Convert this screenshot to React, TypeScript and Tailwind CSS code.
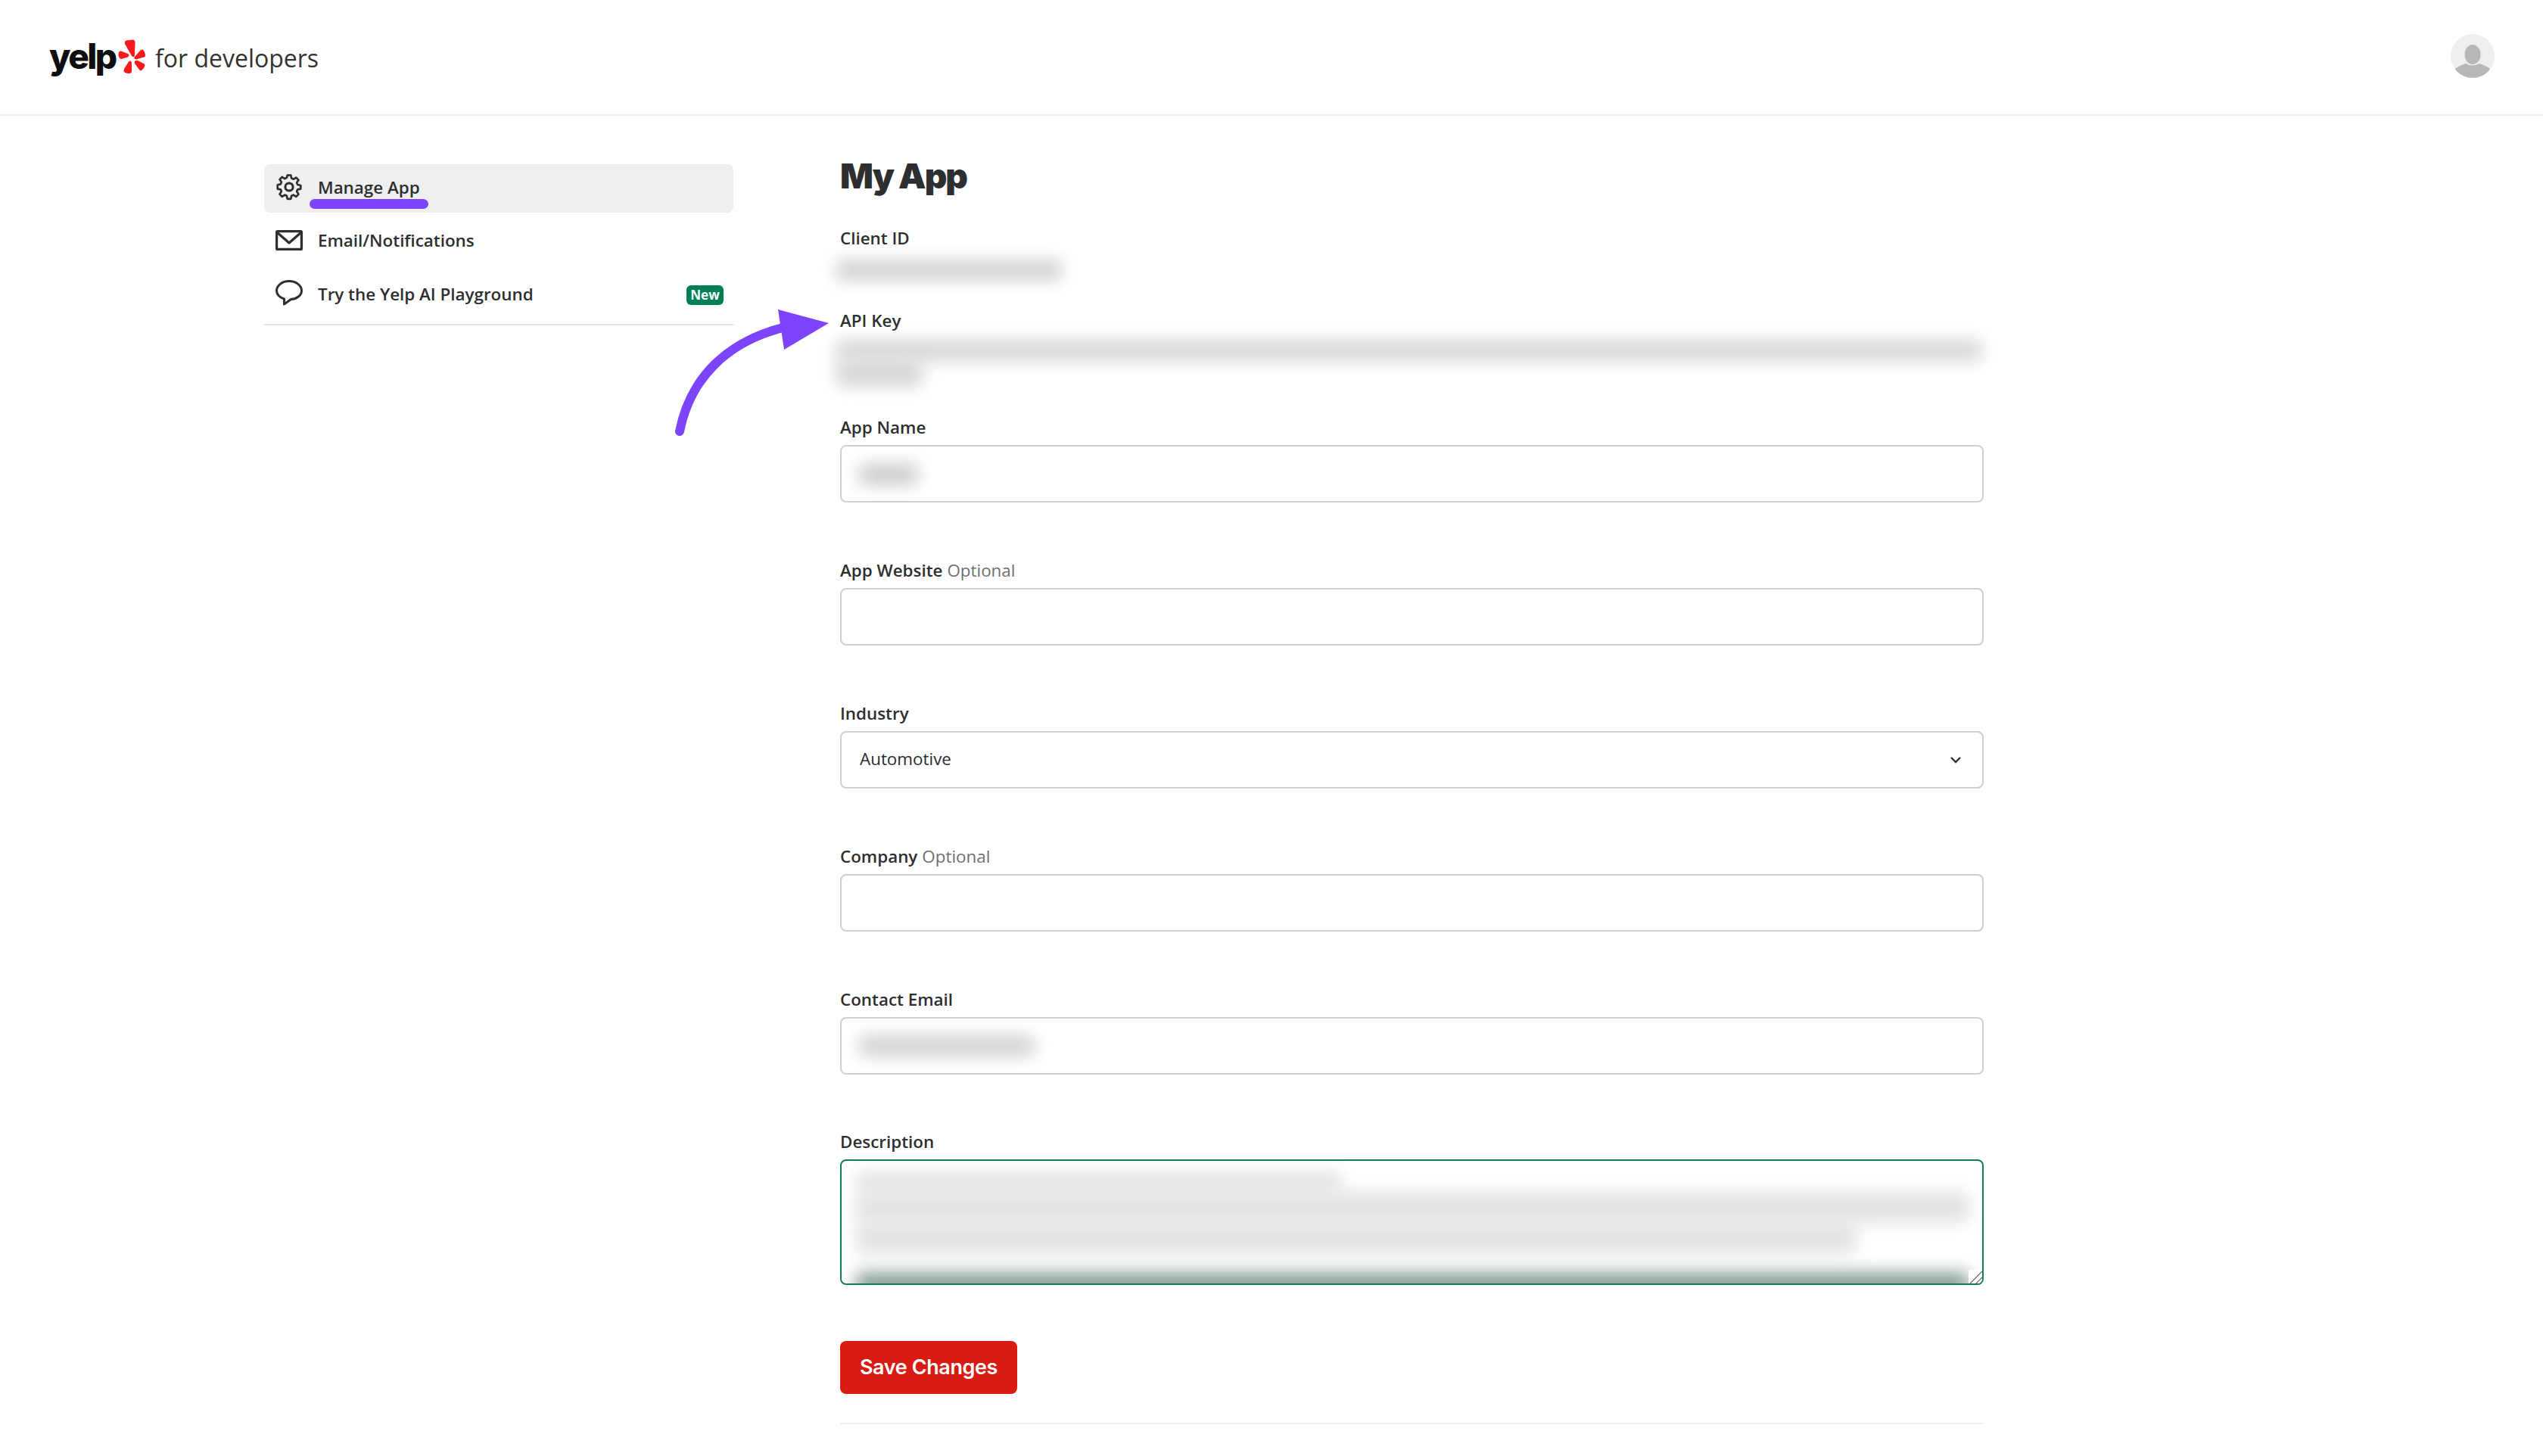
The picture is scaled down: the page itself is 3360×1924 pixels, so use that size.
const openSans = "font-['Open_Sans',sans-serif]";

// stands in for the redacted values, colour comes in through className
const Blur = ({ className }: { className: string }) => <div className={`blur-[11px] ${className}`} />;

const YelpBurst = () => (
  <svg width="36" height="46" viewBox="0 0 36 46" fill="#f8191c">
    <path d="M11 1.5 L19 0.5 Q22.5 0.5 22.5 4 L22 21 Q21.5 25 18 22 L9 6 Q8 3 11 1.5 Z" />
    <path d="M1 23 Q0 21 1 17 Q1.5 15 4 15.5 L13 19 Q16 21 13 23.5 L4 26 Q2 26 1 23 Z" />
    <path d="M8 43 Q7 42 8 39 L14 29.5 Q17 27 18 31 L18 42 Q18 45 15 45 Q10 45 8 43 Z" />
    <path d="M22 29 Q24 27 26 28 L34 32 Q36 33 35 36 Q33 40 31 41 Q29 42 28 40 L22 32 Q21 30 22 29 Z" />
    <path d="M22 23 L30 14 Q32 13 33 14 Q36 17 36 21 Q36 23 34 23.5 L24 26.5 Q20 26 22 23 Z" />
  </svg>
);

const Avatar = () => (
  <svg width="58" height="58" viewBox="0 0 58 58">
    <defs>
      <clipPath id="avatar-clip">
        <circle cx="29" cy="29" r="29" />
      </clipPath>
    </defs>
    <circle cx="29" cy="29" r="29" fill="#efeff0" />
    <g clipPath="url(#avatar-clip)" fill="#b7b7ba">
      <ellipse cx="29" cy="27" rx="10.5" ry="13" />
      <path d="M5 47 Q10 42 20 39 Q29 44 38 39 Q48 42 53 47 L53 60 L5 60 Z" />
    </g>
  </svg>
);

const GearIcon = () => (
  <svg width="36" height="36" viewBox="0 0 24 24" fill="none" stroke="#2d2e2f" strokeWidth="2" strokeLinejoin="round" className="shrink-0 mt-[-1px]">
    <path d="M10.3 1.5h3.4l.6 3 2 .9 2.6-1.6 2.3 2.5-1.7 2.5.8 2 3 .7v3.4l-3 .6-.8 2 1.7 2.6-2.3 2.4-2.6-1.7-2 .9-.6 3h-3.4l-.6-3-2-.9-2.6 1.7-2.3-2.4 1.7-2.6-.8-2-3-.6V11l3-.7.8-2-1.7-2.5 2.3-2.5 2.6 1.6 2-.9z" transform="translate(12 12) scale(.9) translate(-12 -13)" />
    <circle cx="12" cy="12" r="3.4" />
  </svg>
);

const MailIcon = () => (
  <svg width="36" height="27" viewBox="0 0 36 27" fill="none" stroke="#2d2e2f" strokeWidth="3.2" strokeLinejoin="round" className="shrink-0">
    <rect x="1.6" y="1.6" width="32.8" height="23.8" rx="1" />
    <path d="M2 3 L18 17 L34 3" />
  </svg>
);

const ChatIcon = () => (
  <svg width="36" height="34" viewBox="0 0 36 34" fill="none" stroke="#2d2e2f" strokeWidth="3" strokeLinejoin="round" className="shrink-0 mt-[-5px]">
    <path d="M18 1.5 C27.5 1.5 34.5 7.5 34.5 14 C34.5 20.5 28 25 20.5 25.5 L11.5 32 L11.5 25 C5.5 23 1.5 19 1.5 14 C1.5 7.5 8.5 1.5 18 1.5 Z" />
  </svg>
);

const Field = ({ label, optional, children }: { label: string; optional?: boolean; children?: React.ReactNode }) => (
  <div className="mb-[75px]">
    <label className="block h-[32px] text-[22.4px] leading-[30px] font-semibold text-[#2d2e2f] mb-[6px]">
      {label}
      {optional && <span className="ml-[6px] font-normal text-[#6e7072]">Optional</span>}
    </label>
    <div className="h-[76px] rounded-lg border-2 border-[#cfcfcf] bg-white flex items-center px-[24px] overflow-hidden">
      {children}
    </div>
  </div>
);

const App = () => {
  return (
    <div className={`relative min-h-[1924px] w-full bg-white text-[#2d2e2f] ${openSans}`}>
      {/* Header */}
      <header className="h-[153px] border-b-2 border-[#f0f0f0] flex items-center justify-between pl-[65px] pr-[64px]">
        <div className="flex items-center h-[46px] mt-[-1px]">
          <span className="w-[85px] font-['Inter',sans-serif] text-[46px] font-extrabold tracking-[-2.5px] leading-none text-[#0f0f0f] mt-[-2px]">yelp</span>
          <div className="ml-[6px]">
            <YelpBurst />
          </div>
          <span className="ml-[13px] text-[32px] leading-none text-[#333333] mt-[4px]">for developers</span>
        </div>
        <div className="mt-[-4px]">
          <Avatar />
        </div>
      </header>

      <div className="flex pl-[349px] pt-[49px]">
        {/* Sidebar */}
        <nav className="mt-[15px] w-[620px] h-[213px] border-b-2 border-[#e3e3e3] shrink-0 text-[22.4px] font-semibold">
          <div className="h-[64px] pb-[3px] rounded-lg bg-[#efefef] flex items-center gap-[20px] pl-[15px] pr-[13px]">
            <GearIcon />
            Manage App
          </div>
          <div className="h-[72px] pt-[1px] flex items-center gap-[20px] pl-[15px] pr-[13px]">
            <MailIcon />
            Email/Notifications
          </div>
          <div className="h-[72px] flex items-center gap-[20px] pl-[15px] pr-[13px]">
            <ChatIcon />
            <span className="flex-1">Try the Yelp AI Playground</span>
            <span className="h-[26px] w-[49px] mt-[1px] rounded-md bg-[#007f56] text-white text-[17px] font-bold leading-[26px] text-center">New</span>
          </div>
        </nav>

        {/* Form */}
        <main className="ml-[141px] w-[1511px]">
          <h1 className="font-['Inter',sans-serif] text-[46px] font-black leading-[60px] tracking-[-2px] text-[#2d2e2f] mb-[37px]">My App</h1>

          <div className="text-[22.4px] leading-[32px] font-semibold">Client ID</div>
          <div className="h-[77px] pt-[13px] ml-[-4px]">
            <Blur className="h-[26px] w-[296px] bg-[#cfcfcf]" />
          </div>

          <div className="text-[22.4px] leading-[32px] font-semibold">API Key</div>
          <div className="h-[110px] pt-[10px] ml-[-4px]">
            <Blur className="h-[26px] w-[1512px] bg-[#d4d4d4]" />
            <Blur className="h-[34px] w-[112px] bg-[#d4d4d4]" />
          </div>

          <Field label="App Name">
            <Blur className="h-[26px] w-[76px] mt-[2px] bg-[#c8c8c8]" />
          </Field>
          <Field label="App Website" optional />
          <Field label="Industry">
            <span className="flex-1 text-[22.4px] mt-[-3px] text-[#2d2e2f]">Automotive</span>
            <svg width="14" height="10" viewBox="0 0 14 10" fill="none" stroke="#2d2e2f" strokeWidth="2.4" className="mr-[4px]">
              <path d="M1 2 L7 8 L13 2" />
            </svg>
          </Field>
          <Field label="Company" optional />
          <Field label="Contact Email">
            <Blur className="h-[26px] w-[230px] bg-[#cfcfcf]" />
          </Field>

          <label className="block mt-[-2px] h-[32px] text-[22.4px] leading-[32px] font-semibold mb-[7px]">Description</label>
          <div className="relative h-[166px] rounded-lg border-2 border-[#127a5e] bg-white overflow-hidden pl-[20px] pr-[18px] pt-[16px]">
            <Blur className="h-[26px] w-[640px] bg-[#e2e2e2]" />
            <Blur className="h-[39px] w-full bg-[#e2e2e2]" />
            <Blur className="h-[41px] w-[1320px] bg-[#e2e2e2]" />
            <Blur className="h-[30px] w-full mt-[26px] bg-[#7f9a90]" />
            <svg width="18" height="18" viewBox="0 0 18 18" fill="none" stroke="#666666" strokeWidth="1.2" className="absolute right-0 bottom-0 bg-white">
              <path d="M2 18 L18 2 M10 18 L18 10" />
            </svg>
          </div>

          <button className="mt-[74px] block h-[70px] w-[234px] rounded-lg bg-[#d81b13] text-white text-[27px] font-['Inter',sans-serif] font-semibold tracking-[-0.4px]">
            Save Changes
          </button>
          <div className="mt-[38px] border-t-2 border-[#f0f0f0]" />
        </main>
      </div>

      {/* Annotations drawn over the page */}
      <div className="absolute left-[409px] top-[263px] h-[13px] w-[157px] rounded-full bg-[#7c45fb]" />
      <svg width="240" height="190" viewBox="0 0 240 190" className="absolute left-[870px] top-[395px]" fill="#7c45fb">
        <path d="M28 175 C42 105 90 55 172 36" fill="none" stroke="#7c45fb" strokeWidth="12" strokeLinecap="round" />
        <polygon points="158,14 225,32 166,67" />
      </svg>
    </div>
  );
};

export default App;
